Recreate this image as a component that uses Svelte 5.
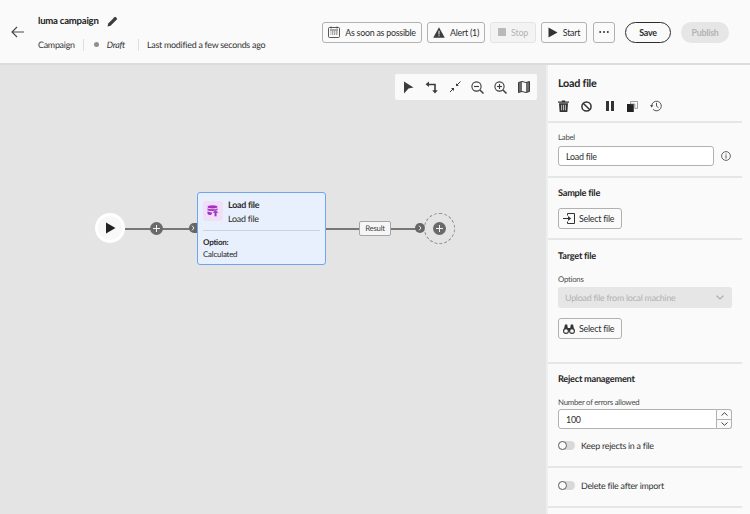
<script>
  const tools = ['pointer', 'swap', 'collapse', 'zoomout', 'zoomin', 'map'];
</script>

<div class="page">
  <header class="topbar">
    <button class="back" aria-label="Back">
      <svg width="14" height="12" viewBox="0 0 14 12"><path d="M13 6H1.500M6 1 1 6l5 5" fill="none" stroke="#4b4b4b" stroke-width="1.200" /></svg>
    </button>
    <div class="titles">
      <div class="title-row">
        <span class="name">luma campaign</span>
        <svg class="pencil" width="11" height="11" viewBox="0 0 11 11"><path d="M0.500 10.500 1.200 7.400 7.400 1.200a1 1 0 0 1 1.400 0l1 1a1 1 0 0 1 0 1.400L3.600 9.800Z" fill="#3c3c3c" /></svg>
      </div>
      <div class="meta">
        <span>Campaign</span>
        <i class="sep"></i>
        <span class="dot"></span>
        <em>Draft</em>
        <i class="sep"></i>
        <span>Last modified a few seconds ago</span>
      </div>
    </div>

    <div class="actions">
      <button class="btn sched">
        <svg width="12" height="12" viewBox="0 0 12 12"><path d="M1.500 1.500h9a1 1 0 0 1 1 1v8a1 1 0 0 1-1 1h-9a1 1 0 0 1-1-1v-8a1 1 0 0 1 1-1Z" fill="none" stroke="#444" stroke-width=".9" /><path d="M3 .5v2M9 .5v2M2 4h8" stroke="#444" stroke-width=".9" /><path d="M2.500 5.500h7v1h-7zM2.500 7.500h7v1h-7z" fill="#555" /><path d="M3.500 5v4.500M5.500 5v4.500M7.500 5v4.500" stroke="#fafafa" stroke-width=".7" /></svg>
        As soon as possible
      </button>
      <button class="btn alert">
        <svg width="12" height="11" viewBox="0 0 12 11"><path d="M6 .3 11.800 10.700H.2Z" fill="#3d3d3d" /><path d="M5.500 3.800h1v3.600h-1zM5.500 8.200h1v1h-1z" fill="#fafafa" /></svg>
        Alert (1)
      </button>
      <button class="btn stop">
        <span class="square"></span>
        Stop
      </button>
      <button class="btn start">
        <svg width="10" height="11" viewBox="0 0 10 11"><path d="M.5 .5 9.500 5.500.5 10.500Z" fill="#333" /></svg>
        Start
      </button>
      <button class="btn more" aria-label="More">
        <svg width="10" height="2" viewBox="0 0 10 2"><circle cx="1.200" cy="1" r="1" fill="#333" /><circle cx="5" cy="1" r="1" fill="#333" /><circle cx="8.800" cy="1" r="1" fill="#333" /></svg>
      </button>
      <button class="pill save">Save</button>
      <button class="pill publish">Publish</button>
    </div>
  </header>

  <div class="body">
    <main class="canvas">
      <div class="toolbar">
        {#each tools as tool}
          <span class="tool">
            {#if tool === 'pointer'}
              <svg width="11" height="13" viewBox="0 0 11 13"><path d="M1 .5 10.500 6.500 5.500 7.500 1 12.500Z" fill="#3c3c3c" /></svg>
            {:else if tool === 'swap'}
              <svg width="13" height="13" viewBox="0 0 13 13"><path d="M4 .5 .5 3.200 4 6V4.200h5.200v5H7.200l2.800 3.400 2.800-3.400h-2V2.800H4Z" fill="#3c3c3c" /></svg>
            {:else if tool === 'collapse'}
              <svg width="12" height="12" viewBox="0 0 12 12"><path d="M11.500.5 7.800 4.200M1 11 4.200 7.800" stroke="#3c3c3c" stroke-width="1" /><path d="M7 2.200V5h2.800ZM5 10V7H2Z" fill="#3c3c3c" /></svg>
            {:else if tool === 'zoomout' || tool === 'zoomin'}
              <svg width="13" height="13" viewBox="0 0 13 13"><circle cx="5.500" cy="5.500" r="4.600" fill="none" stroke="#3c3c3c" stroke-width="1.100" /><path d="m9 9 3.500 3.500" stroke="#3c3c3c" stroke-width="1.500" /><path d="M3 5.500h5" stroke="#3c3c3c" stroke-width="1.100" />{#if tool === 'zoomin'}<path d="M5.500 3v5" stroke="#3c3c3c" stroke-width="1.100" />{/if}</svg>
            {:else}
              <svg width="12" height="12" viewBox="0 0 12 12"><path d="M.5 1.500 4 .5l4 1 3.500-1v10l-3.500 1-4-1-3.500 1Z" fill="none" stroke="#3c3c3c" stroke-width="1" /><path d="M.5 1.500 4 .5v10l-3.500 1ZM8 1.500l3.500-1v10l-3.500 1Z" fill="#3c3c3c" opacity=".75" /></svg>
            {/if}
          </span>
        {/each}
      </div>

      <div class="wire wire-a"></div>
      <div class="wire wire-b"></div>

      <div class="start-node">
        <svg width="11" height="12" viewBox="0 0 11 12"><path d="M1 .5 10.500 6 1 11.500Z" fill="#222" /></svg>
      </div>

      <span class="plus add-a"></span>
      <span class="port port-a"><svg width="4" height="6" viewBox="0 0 4 6"><path d="m1 .7 2 2.300-2 2.300" fill="none" stroke="#eee" stroke-width="1" /></svg></span>

      <div class="card">
        <div class="card-head">
          <span class="card-icon">
            <svg width="12" height="12" viewBox="0 0 12 12"><ellipse cx="5.500" cy="1.800" rx="5" ry="1.600" fill="#a82fc4" /><path d="M.5 3.300c1 1.300 9 1.300 10 0v1.800c-1 1.300-9 1.300-10 0ZM.5 6.200c1 1 4 1.200 5 1.200L4 10c-2 0-3-.6-3.500-1.300Z" fill="#a82fc4" /><path d="M8.500 4.800 11.800 8h-2v3.500H7.300V8h-2Z" fill="#a82fc4" stroke="#efdff8" stroke-width=".5" /></svg>
          </span>
          <div class="card-titles">
            <strong>Load file</strong>
            <span>Load file</span>
          </div>
        </div>
        <hr />
        <div class="card-foot">
          <strong>Option:</strong>
          <span>Calculated</span>
        </div>
      </div>

      <div class="result">Result</div>
      <span class="port port-b"><svg width="4" height="6" viewBox="0 0 4 6"><path d="m1 .7 2 2.300-2 2.300" fill="none" stroke="#eee" stroke-width="1" /></svg></span>
      <div class="drop"><span class="plus"></span></div>
    </main>

    <aside class="panel">
      <section class="sec head">
        <h2>Load file</h2>
        <div class="icons">
          <svg width="11" height="12" viewBox="0 0 11 12"><path d="M0 1.600h11v1.100H0zM3.800 1.600V.4h3.400v1.200" fill="#333" /><path d="M1 3.300h9l-.6 8.200a.5.5 0 0 1-.5.500H2.100a.5.5 0 0 1-.5-.5Z" fill="#333" /><path d="M3.600 4.800v5.500M5.500 4.800v5.500M7.400 4.800v5.500" stroke="#fafafa" stroke-width=".7" /></svg>
          <svg width="11" height="11" viewBox="0 0 11 11"><circle cx="5.500" cy="5.500" r="4.600" fill="none" stroke="#333" stroke-width="1.500" /><path d="m2.200 2.200 6.600 6.600" stroke="#333" stroke-width="1.500" /></svg>
          <svg width="8" height="10" viewBox="0 0 8 10"><path d="M0 0h3v10H0zM5 0h3v10H5z" fill="#333" /></svg>
          <svg width="11" height="11" viewBox="0 0 11 11"><path d="M0 3h6.800v8H0Z" fill="#222" /><path d="M3.600.5h6.900v6.900H7.800V3H3.600Z" fill="#fafafa" stroke="#777" stroke-width=".7" /></svg>
          <svg width="12" height="12" viewBox="0 0 12 12"><path d="M1.700 6a4.800 4.800 0 1 1 1.400 3.400" fill="none" stroke="#444" stroke-width=".9" /><path d="M0 5.200h3.400L1.700 7.400Z" fill="#444" /><path d="M6.500 2.800v3.400l2 1.400" fill="none" stroke="#444" stroke-width=".9" /></svg>
        </div>
      </section>

      <section class="sec label-sec">
        <label for="label-input">Label</label>
        <div class="with-info">
          <input id="label-input" class="field" value="Load file" />
          <svg width="10" height="10" viewBox="0 0 10 10"><circle cx="5" cy="5" r="4.400" fill="none" stroke="#555" stroke-width=".9" /><path d="M4.500 4.300h1v3.200h-1zM4.500 2.500h1v1h-1z" fill="#555" /></svg>
        </div>
      </section>

      <section class="sec sample">
        <h3>Sample file</h3>
        <button class="btn">
          <svg width="12" height="11" viewBox="0 0 12 11"><path d="M4.500 2.500V.5h7v10h-7V8.500" fill="none" stroke="#333" stroke-width="1" /><path d="M0 5h5V3l3.200 2.500L5 8V6H0Z" fill="#333" /></svg>
          Select file
        </button>
      </section>

      <section class="sec target">
        <h3>Target file</h3>
        <span class="cap">Options</span>
        <div class="select">
          Upload file from local machine
          <svg width="8" height="5" viewBox="0 0 8 5"><path d="m.5.7 3.500 3.300L7.500.7" fill="none" stroke="#aaa" stroke-width="1.100" /></svg>
        </div>
        <button class="btn">
          <svg width="12" height="10" viewBox="0 0 12 10"><path d="M2 .5h2.200l.6 3.500h2.400l.6-3.500H10l1.500 6.500h-11Z" fill="#333" /><circle cx="3" cy="7" r="2.400" fill="#fafafa" stroke="#333" stroke-width="1.100" /><circle cx="9" cy="7" r="2.400" fill="#fafafa" stroke="#333" stroke-width="1.100" /></svg>
          Select file
        </button>
      </section>

      <section class="sec reject">
        <h3>Reject management</h3>
        <label for="errors">Number of errors allowed</label>
        <div class="stepper">
          <input id="errors" class="num" value="100" />
          <div class="arrows">
            <span><svg width="7" height="4" viewBox="0 0 7 4"><path d="M.5 3.500 3.500.7l3 2.800" fill="none" stroke="#444" stroke-width="1" /></svg></span>
            <span><svg width="7" height="4" viewBox="0 0 7 4"><path d="m.5.5 3 2.800 3-2.800" fill="none" stroke="#444" stroke-width="1" /></svg></span>
          </div>
        </div>
        <div class="switch-row"><span class="switch"></span>Keep rejects in a file</div>
      </section>

      <section class="sec delete">
        <div class="switch-row"><span class="switch"></span>Delete file after import</div>
      </section>
    </aside>
  </div>
</div>

<style>
  :global(body) {
    margin: 0;
    overflow: hidden;
    background: #fafafa;
  }

  .page {
    width: 750px;
    height: 514px;
    display: flex;
    flex-direction: column;
    overflow: hidden;
    font-family: Lato, "Open Sans", sans-serif;
    font-size: 8.900px;
    letter-spacing: -0.25px;
    color: #2a2a2a;
    background: #fafafa;
    text-rendering: geometricPrecision;
  }

  .topbar {
    height: 65px;
    flex: none;
    display: flex;
    align-items: center;
    box-sizing: border-box;
    border-bottom: 2px solid #dcdcdc;
    background: #fafafa;
  }

  .back {
    width: 14px;
    height: 12px;
    margin-left: 11px;
    padding: 0;
    border: none;
    background: none;
    display: flex;
  }

  .titles {
    margin-left: 13px;
    display: flex;
    flex-direction: column;
    gap: 11px;
    padding-top: 3px;
  }

  .title-row {
    display: flex;
    align-items: center;
    gap: 8px;
    height: 12px;
  }

  .name {
    font-weight: 700;
    font-size: 9.600px;
    color: #222;
  }

  .meta {
    display: flex;
    align-items: center;
    height: 13px;
    white-space: nowrap;
    color: #333;
  }

  .sep {
    width: 1px;
    height: 12px;
    margin: 0 8px;
    background: #dedede;
  }

  .dot {
    width: 5px;
    height: 5px;
    border-radius: 50%;
    background: #8e8e8e;
    margin: 0 8px 0 2px;
  }

  .meta em {
    margin-right: 5px;
  }

  .actions {
    margin-left: auto;
    margin-right: 21px;
    display: flex;
    align-items: center;
    margin-top: 1px;
  }

  .btn {
    height: 21px;
    box-sizing: border-box;
    display: inline-flex;
    align-items: center;
    justify-content: center;
    gap: 5px;
    padding: 0;
    border: 1px solid #b1b1b1;
    border-radius: 3px;
    background: #fafafa;
    color: #2e2e2e;
    font: inherit;
    letter-spacing: inherit;
    white-space: nowrap;
  }

  .btn svg { flex: none; }

  .sched { width: 100px; margin-right: 5px; }
  .alert { width: 58px; margin-right: 5px; }
  .stop { width: 46px; margin-right: 5px; color: #b4b4b4; border-color: #e4e4e4; background: #f3f3f3; }
  .start { width: 46px; margin-right: 6px; }
  .more { width: 22px; margin-right: 10px; }

  .square {
    width: 8px;
    height: 8px;
    background: #b9b9b9;
  }

  .pill {
    height: 21px;
    box-sizing: border-box;
    border-radius: 11px;
    padding: 0;
    font: inherit;
    letter-spacing: inherit;
    font-weight: 700;
  }

  .save {
    width: 46px;
    margin-right: 10px;
    border: 1.500px solid #2c2c2c;
    background: #fafafa;
    color: #2c2c2c;
  }

  .publish {
    width: 48px;
    border: none;
    background: #e6e6e6;
    color: #b3b3b3;
  }

  .body {
    flex: 1;
    display: flex;
    min-height: 0;
  }

  .canvas {
    position: relative;
    width: 548px;
    box-sizing: border-box;
    flex: none;
    background: #e4e4e4;
    border-right: 2px solid #eeeeee;
  }

  /* canvas items are placed relative to the canvas, page y minus 65 */
  .toolbar {
    position: absolute;
    left: 395px;
    top: 9px;
    width: 142px;
    height: 26px;
    box-sizing: border-box;
    padding: 0 2px;
    display: flex;
    justify-content: space-between;
    background: #fafafa;
    border-radius: 2px;
  }

  .tool {
    width: 23px;
    display: flex;
    align-items: center;
    justify-content: center;
  }

  .wire {
    position: absolute;
    top: 163px;
    height: 1.500px;
    background: #777;
  }

  .wire-a { left: 125px; width: 72px; }
  .wire-b { left: 325px; width: 92px; }

  .start-node {
    position: absolute;
    left: 95px;
    top: 148px;
    width: 30px;
    height: 30px;
    box-sizing: border-box;
    border: 3px solid #fff;
    border-radius: 50%;
    background: #f8f8f8;
    display: flex;
    align-items: center;
    justify-content: center;
  }

  .plus {
    position: relative;
    display: block;
    width: 13px;
    height: 13px;
    border-radius: 50%;
    background: #6a6a6a;
  }

  .plus::before,
  .plus::after {
    content: '';
    position: absolute;
    background: #f2f2f2;
  }

  .plus::before { left: 3px; top: 6px; width: 7px; height: 1px; }
  .plus::after { left: 6px; top: 3px; width: 1px; height: 7px; }

  .add-a {
    position: absolute;
    left: 150px;
    top: 157px;
  }

  .port {
    position: absolute;
    top: 158px;
    height: 10px;
    display: flex;
    align-items: center;
    justify-content: center;
    background: #666;
  }

  .port-a { left: 189px; width: 8px; border-radius: 5px 0 0 5px; }
  .port-b { left: 415px; width: 10px; border-radius: 5px; }

  .card {
    position: absolute;
    left: 197px;
    top: 127px;
    width: 129px;
    height: 73px;
    box-sizing: border-box;
    border: 1px solid #6fa5ee;
    border-radius: 3px;
    background: #e9f0fd;
    padding: 8px 5px 0;
  }

  .card-head {
    display: flex;
    gap: 5px;
    height: 29px;
  }

  .card-icon {
    width: 20px;
    height: 20px;
    flex: none;
    border-radius: 3px;
    background: #efdff8;
    display: flex;
    align-items: center;
    justify-content: center;
  }

  .card-titles {
    display: flex;
    flex-direction: column;
    margin-top: -3px;
    gap: 1px;
    line-height: 13px;
    color: #2c2c2c;
  }

  .card-titles strong {
    font-weight: 700;
  }

  .card hr {
    margin: 0;
    height: 1px;
    border: none;
    background: #c6d2de;
  }

  .card-foot {
    display: flex;
    flex-direction: column;
    margin-top: 5px;
    font-size: 8px;
    line-height: 12px;
  }

  .card-foot strong {
    font-weight: 700;
  }

  .result {
    position: absolute;
    left: 359px;
    top: 156px;
    width: 32px;
    height: 15px;
    box-sizing: border-box;
    border: 1px solid #a5a5a5;
    border-radius: 2px;
    background: #f6f6f6;
    color: #444;
    font-size: 7.800px;
    line-height: 13px;
    text-align: center;
  }

  .drop {
    position: absolute;
    left: 424px;
    top: 148px;
    width: 31px;
    height: 31px;
    box-sizing: border-box;
    border: 1px dashed #8c8c8c;
    border-radius: 50%;
    display: flex;
    align-items: center;
    justify-content: center;
  }

  .panel {
    width: 202px;
    flex: none;
    box-sizing: border-box;
    padding-right: 8px;
    background: #fafafa;
    overflow: hidden;
  }

  .sec {
    box-sizing: border-box;
    padding: 0 10px;
    border-bottom: 2px solid #e6e6e6;
    display: flex;
    flex-direction: column;
    align-items: flex-start;
  }

  h2, h3 {
    margin: 0;
    font-weight: 700;
    font-size: 9.200px;
    line-height: 13px;
    color: #262626;
  }

  h2 { font-size: 10.800px; }

  .head { height: 58px; padding-top: 12px; }

  .icons {
    display: grid;
    grid-template-columns: repeat(5, 23px);
    justify-items: center;
    align-items: center;
    margin-top: 9px;
    margin-left: -6px;
    height: 14px;
  }

  .label-sec { height: 55px; padding-top: 9px; }

  label, .cap {
    font-size: 7.800px;
    line-height: 11px;
    color: #4a4a4a;
    margin-bottom: 3px;
  }

  .with-info {
    display: flex;
    align-items: center;
    gap: 7px;
  }

  .field,
  .num {
    box-sizing: border-box;
    height: 20px;
    border: 1px solid #b1b1b1;
    border-radius: 3px;
    background: #fff;
    font: inherit;
    letter-spacing: inherit;
    color: #2e2e2e;
    padding: 0 7px;
    outline: none;
  }

  .field { width: 156px; }

  .sample { height: 62px; padding-top: 8px; }

  .sample .btn,
  .target .btn {
    width: 64px;
    justify-content: flex-start;
    padding-left: 4px;
    gap: 4px;
  }

  .sample .btn { margin-top: 9px; }

  .target { height: 124px; padding-top: 9px; }
  .target .cap { margin-top: 12px; margin-bottom: 2px; }
  .target .btn { margin-top: 10px; }

  .select {
    width: 174px;
    height: 21px;
    box-sizing: border-box;
    padding: 0 8px 0 7px;
    border-radius: 3px;
    background: #e6e6e6;
    color: #b1b1b1;
    display: flex;
    align-items: center;
    justify-content: space-between;
  }

  .reject { height: 104px; padding-top: 8px; }
  .reject label { margin-top: 12px; margin-bottom: 1px; }

  .stepper {
    display: flex;
    width: 174px;
    height: 20px;
  }

  .num {
    flex: 1;
    min-width: 0;
    border-radius: 3px 0 0 3px;
  }

  .arrows {
    width: 15px;
    box-sizing: border-box;
    display: flex;
    flex-direction: column;
    border: 1px solid #b1b1b1;
    border-left: none;
    border-radius: 0 3px 3px 0;
    background: #fafafa;
  }

  .arrows span {
    flex: 1;
    display: flex;
    align-items: center;
    justify-content: center;
  }

  .arrows span + span {
    border-top: 1px solid #b1b1b1;
  }

  .switch-row {
    display: flex;
    align-items: center;
    gap: 6px;
    color: #333;
  }

  .reject .switch-row { margin-top: 11px; }

  .switch {
    position: relative;
    width: 17px;
    height: 9px;
    border-radius: 5px;
    background: #d8d8d8;
  }

  .switch::before {
    content: '';
    position: absolute;
    left: 0;
    top: 0;
    width: 9px;
    height: 9px;
    box-sizing: border-box;
    border: 1.500px solid #5f5f5f;
    border-radius: 50%;
    background: #fafafa;
  }

  .delete { height: 40px; padding-top: 12px; }
</style>
